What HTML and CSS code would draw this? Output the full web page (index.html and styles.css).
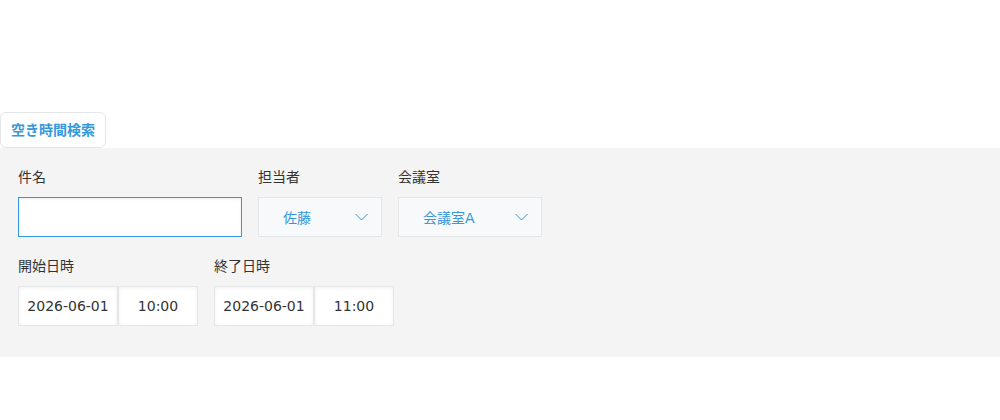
FILE: index.html
```html
<!DOCTYPE html>
<html lang="ja">
<head>
<meta charset="utf-8">
<link rel="stylesheet" href="styles.css">
</head>
<body>
<div class="top-space"></div>
<button class="search-btn" type="button">空き時間検索</button>
<div class="panel">
  <div class="row">
    <div class="field">
      <div class="label">件名</div>
      <div class="text-input"></div>
    </div>
    <div class="field">
      <div class="label">担当者</div>
      <div class="select w124"><span>佐藤</span>
        <svg class="chev" width="13" height="8" viewBox="0 0 13 8"><path d="M0.5 1 L6.5 7 L12.5 1" fill="none" stroke="#3498db" stroke-width="1"/></svg>
      </div>
    </div>
    <div class="field">
      <div class="label">会議室</div>
      <div class="select w144"><span>会議室A</span>
        <svg class="chev" width="13" height="8" viewBox="0 0 13 8"><path d="M0.5 1 L6.5 7 L12.5 1" fill="none" stroke="#3498db" stroke-width="1"/></svg>
      </div>
    </div>
  </div>
  <div class="row">
    <div class="field">
      <div class="label">開始日時</div>
      <div class="datetime">
        <div class="box date">2026-06-01</div>
        <div class="box time">10:00</div>
      </div>
    </div>
    <div class="field">
      <div class="label">終了日時</div>
      <div class="datetime">
        <div class="box date">2026-06-01</div>
        <div class="box time">11:00</div>
      </div>
    </div>
  </div>
</div>
</body>
</html>
```
FILE: styles.css
```css
* { box-sizing: border-box; }
body {
  margin: 0;
  font-family: "DejaVu Sans", "Noto Sans CJK JP", sans-serif;
  color: #333;
  background: #fff;
}
.top-space { height: 112px; }
.search-btn {
  display: block;
  height: 36px;
  width: 106px;
  margin: 0;
  padding: 0;
  border: 1px solid #e3e7e8;
  border-radius: 6px;
  background: #fff;
  color: #3498db;
  font-family: inherit;
  font-size: 14px;
  font-weight: bold;
  line-height: 34px;
  text-align: center;
}
.panel {
  background: #f4f4f4;
  padding: 20px 18px 31px;
  display: flex;
  flex-direction: column;
  gap: 20px;
}
.row { display: flex; gap: 16px; }
.field { display: flex; flex-direction: column; }
.label {
  font-size: 14px;
  line-height: 18px;
  height: 20px;
  margin-bottom: 9px;
  color: #333;
}
.text-input {
  width: 224px;
  height: 40px;
  background: #fff;
  border: 1px solid #3498db;
  box-shadow: inset 0 1px 3px rgba(0,0,0,0.08);
}
.select {
  height: 40px;
  background: #f7f9fa;
  border: 1px solid #e3e7e8;
  display: flex;
  align-items: center;
  justify-content: space-between;
  padding: 0 13px 0 24px;
  color: #3498db;
  font-size: 14px;
}
.w124 { width: 124px; }
.w144 { width: 144px; }
.chev { display: block; }
.datetime { display: flex; }
.box {
  height: 40px;
  background: #fff;
  border: 1px solid #e3e7e8;
  box-shadow: inset 0 1px 4px rgba(0,0,0,0.06);
  display: flex;
  align-items: center;
  justify-content: center;
  font-size: 14px;
  color: #333;
}
.date { width: 100px; }
.time { width: 80px; }
```
